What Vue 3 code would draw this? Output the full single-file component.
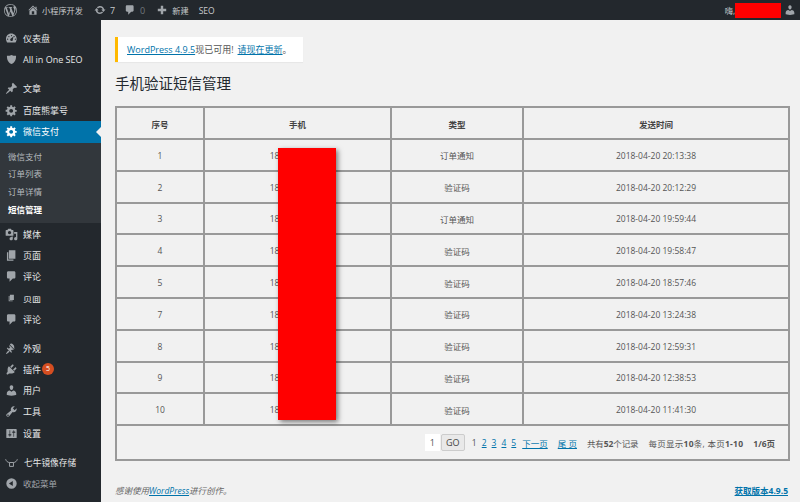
<script setup>
const topItems = [
  { icon: 'gauge', label: '仪表盘' },
  { icon: 'shield', label: 'All in One SEO' },
  { sep: true },
  { icon: 'pin', label: '文章' },
  { icon: 'gear', label: '百度熊掌号' },
]
const subItems = [
  { label: '微信支付' },
  { label: '订单列表' },
  { label: '订单详情' },
  { label: '短信管理', current: true },
]
const lowerItems = [
  { icon: 'media', label: '媒体' },
  { icon: 'page', label: '页面' },
  { icon: 'bubble', label: '评论' },
  { icon: 'page', label: '页面', clipped: true },
  { icon: 'bubble', label: '评论' },
  { sep: true },
  { icon: 'brush', label: '外观' },
  { icon: 'plug', label: '插件', badge: '5' },
  { icon: 'user', label: '用户' },
  { icon: 'wrench', label: '工具' },
  { icon: 'settings', label: '设置' },
  { sep: true },
]
const paths = {
  wp: 'M20 10c0-5.510-4.490-10-10-10C4.480 0 0 4.490 0 10c0 5.520 4.480 10 10 10 5.510 0 10-4.480 10-10zM7.780 15.370L4.370 6.220c.55-.02 1.170-.08 1.170-.08.5-.06.44-1.130-.06-1.110 0 0-1.450.11-2.370.11-.18 0-.37 0-.58-.01C4.120 2.690 6.890 1.050 10 1.050c2.300 0 4.390.87 5.980 2.300-.67-.11-1.620.38-1.620 1.540 0 .72.430 1.330.880 2.050.35.610.550 1.360.550 2.460 0 1.490-1.400 5-1.400 5l-3.030-8.370c.54-.02.820-.17.820-.17.5-.05.44-1.250-.06-1.220 0 0-1.440.12-2.380.12-.87 0-2.330-.12-2.330-.12-.5-.03-.56 1.200-.06 1.220l.92.08 1.260 3.410zM17.410 10c.24-.64.740-1.870.430-4.250.7 1.290 1.050 2.710 1.050 4.250 0 3.290-1.730 6.240-4.400 7.780.97-2.590 1.940-5.210 2.920-7.780zM6.100 18.090C3.120 16.650 1.110 13.530 1.110 10c0-1.300.23-2.480.72-3.590C3.250 10.300 4.670 14.200 6.100 18.090zm4.030-6.630l2.580 6.980c-.86.290-1.760.450-2.710.450-.79 0-1.570-.11-2.290-.33.81-2.380 1.620-4.740 2.420-7.100z',
  gauge: 'M3.760 16h12.480c1.100-1.430 1.760-3.210 1.760-5.140C18 6.200 14.180 2.420 9.500 2.420S1.500 6.200 1.500 10.860c0 1.930.66 3.710 1.760 5.140zM10 4.500a1 1 0 1 1 0 2 1 1 0 0 1 0-2zM6 6a1 1 0 1 1 0 2 1 1 0 0 1 0-2zm8 0a1 1 0 1 1 0 2 1 1 0 0 1 0-2zM4 10a1 1 0 1 1 0 2 1 1 0 0 1 0-2zm12 0a1 1 0 1 1 0 2 1 1 0 0 1 0-2zm-6 4a2 2 0 0 1-.8-3.830L13 7l-1.200 5.900A2 2 0 0 1 10 14z',
  shield: 'M10 3C7.500 4.200 5 4.600 3 4.300c-.2 5.700 1.800 10.700 7 12.700 5.200-2 7.200-7 7-12.700-2 .3-4.500-.1-7-1.300z',
  pin: 'M10.440 3.020l1.820-1.820 6.360 6.350-1.830 1.820c-1.050-.68-2.480-.57-3.410.36l-.75.750c-.92.930-1.040 2.350-.35 3.410l-1.830 1.820-2.410-2.410-2.800 2.790c-.42.420-3.380 2.710-3.800 2.290s1.860-3.390 2.280-3.810l2.790-2.790L4.100 9.790l1.830-1.820c1.050.690 2.480.570 3.400-.360l.75-.750c.93-.920 1.050-2.350.36-3.400z',
  gear: 'M18 12h-2.180c-.17.7-.44 1.350-.81 1.930l1.540 1.540-2.100 2.100-1.540-1.540c-.58.360-1.230.640-1.910.810V19H8v-2.180c-.68-.170-1.330-.450-1.910-.810l-1.540 1.540-2.120-2.120 1.540-1.540c-.360-.580-.640-1.230-.810-1.910H1V9.030h2.170c.170-.700.440-1.350.810-1.940L2.430 5.550l2.100-2.100 1.540 1.540c.580-.370 1.240-.640 1.930-.810V2h3v2.180c.68.170 1.330.440 1.910.810l1.540-1.540 2.120 2.120-1.540 1.540c.360.590.640 1.240.810 1.940H18V12zm-8.500 1.500c1.660 0 3-1.340 3-3s-1.340-3-3-3-3 1.340-3 3 1.340 3 3 3z',
  media: 'M13 11V4c0-.55-.45-1-1-1h-1.670L9 1H5L3.670 3H2c-.55 0-1 .45-1 1v7c0 .55.45 1 1 1h10c.55 0 1-.45 1-1zM7 4.500c1.380 0 2.500 1.120 2.500 2.500S8.380 9.500 7 9.500 4.500 8.380 4.500 7 5.620 4.500 7 4.500zM14 6h5v10.500c0 1.380-1.120 2.500-2.500 2.500S14 17.880 14 16.500s1.120-2.500 2.500-2.500c.17 0 .34.020.5.050V9h-3V6zm-4 8.050V13h2v3.500c0 1.380-1.120 2.500-2.500 2.500S7 17.880 7 16.500 8.120 14 9.500 14c.17 0 .34.020.5.050z',
  page: 'M6 15V2h10v13H6zm-1 1h8v2H3V5h2v11z',
  bubble: 'M5 2h9c1.100 0 2 .9 2 2v7c0 1.100-.9 2-2 2h-2l-5 5v-5H5c-1.100 0-2-.9-2-2V4c0-1.100.9-2 2-2z',
  brush: 'M14.480 11.060L7.410 3.990l1.500-1.500c.5-.56 2.300.2 3.540 1.450 1.250 1.250 2.160 3.050 1.590 3.540zm-7.780-6.400l6.720 6.720-1.410 1.410-1.060-1.060-1.770 1.770 1.770 1.770-1.410 1.410-6.720-6.720 1.410-1.410 1.770 1.770 1.770-1.770-1.060-1.060zM5 13l2 2-4.500 3.500-1-1z',
  plug: 'M13.110 4.360L9.870 7.600 8 5.730l3.240-3.240c.35-.34 1.050-.2 1.560.32.520.51.660 1.210.31 1.550zm-8 1.770l.91-1.120 9.010 9.010-1.190.84c-.71.710-2.630 1.160-3.820 1.160H6.140L4.900 17.260c-.59.590-1.540.59-2.120 0-.59-.58-.59-1.530 0-2.120l1.240-1.240v-3.880c0-1.130.4-3.080 1.090-3.890zm7.260 3.970l3.240-3.240c.34-.35 1.040-.21 1.550.31.520.51.660 1.210.31 1.550l-3.240 3.250z',
  user: 'M10 9.250c-2.270 0-2.730-3.440-2.730-3.440C7 4.020 7.820 2 9.970 2c2.160 0 2.980 2.020 2.710 3.810 0 0-.41 3.440-2.680 3.440zm0 2.570L12.720 10c2.390 0 4.520 2.330 4.520 4.530v2.490s-3.650 1.130-7.240 1.130c-3.650 0-7.240-1.130-7.240-1.130v-2.490c0-2.250 1.940-4.480 4.470-4.480z',
  wrench: 'M16.680 9.770c-1.340 1.340-3.300 1.670-4.950.99l-5.410 6.520c-.99.990-2.590.99-3.580 0s-.99-2.590 0-3.570l6.520-5.420c-.68-1.650-.35-3.610.99-4.950 1.280-1.280 3.120-1.620 4.720-1.060l-2.890 2.890 2.820 2.820 2.860-2.860c.53 1.580.18 3.390-1.080 4.640zM3.810 16.740c.45.450 1.180.45 1.630 0 .44-.45.44-1.180 0-1.630-.45-.45-1.180-.45-1.630 0-.45.450-.45 1.180 0 1.630z',
  settings: 'M18 16V4c0-.55-.45-1-1-1H3c-.55 0-1 .45-1 1v12c0 .55.45 1 1 1h14c.55 0 1-.45 1-1zM8 11h1c.55 0 1 .45 1 1s-.45 1-1 1H8v1.500c0 .28-.22.5-.5.5s-.5-.22-.5-.5V13H6c-.55 0-1-.45-1-1s.45-1 1-1h1V5.500c0-.28.22-.5.5-.5s.5.22.5.5V11zm5-2h-1c-.55 0-1-.45-1-1s.45-1 1-1h1V5.500c0-.28.22-.5.5-.5s.5.22.5.5V7h1c.55 0 1 .45 1 1s-.45 1-1 1h-1v5.500c0 .28-.22.5-.5.5s-.5-.22-.5-.5V9z',
  home: 'M16 8.500l1.530 1.530-1.060 1.060L10 4.620l-6.470 6.470-1.060-1.060L10 2.500l4 4v-2h2v4zm-6-2.460l6 5.990V18H4v-5.970zM12 17v-5H8v5h4z',
  update: 'M10.200 3.280c3.530 0 6.430 2.610 6.920 6h2.080l-3.500 4-3.500-4h2.320c-.45-1.970-2.210-3.440-4.320-3.440-1.450 0-2.730.71-3.540 1.780L4.950 5.660C6.230 4.200 8.110 3.280 10.200 3.280zm-.4 13.440c-3.520 0-6.430-2.610-6.920-6H.8l3.500-4c1.170 1.330 2.330 2.670 3.500 4H5.480c.45 1.970 2.210 3.440 4.320 3.440 1.450 0 2.730-.71 3.540-1.780l1.710 1.950c-1.280 1.460-3.150 2.390-5.250 2.390z',
  plus: 'M17 8v4h-5v5H8v-5H3V8h5V3h4v5h5z',
  collapse: 'M10 2a8 8 0 1 0 0 16 8 8 0 0 0 0-16zm2 4v8l-6-4z',
}
const rows = [
  [1, '订单通知', '2018-04-20 20:13:38'],
  [2, '验证码', '2018-04-20 20:12:29'],
  [3, '订单通知', '2018-04-20 19:59:44'],
  [4, '验证码', '2018-04-20 19:58:47'],
  [5, '验证码', '2018-04-20 18:57:46'],
  [7, '验证码', '2018-04-20 13:24:38'],
  [8, '验证码', '2018-04-20 12:59:31'],
  [9, '验证码', '2018-04-20 12:38:53'],
  [10, '验证码', '2018-04-20 11:41:30'],
]
</script>

<template>
  <div class="page">
    <header class="bar">
      <div class="bar-left">
        <svg class="wp" viewBox="0 0 20 20"><path :d="paths.wp" /></svg>
        <span class="bar-item site"><svg class="bi" viewBox="0 0 20 20"><path :d="paths.home" /></svg><span class="t-small">小程序开发</span></span>
        <span class="bar-item"><svg class="bi" viewBox="0 0 20 20"><path :d="paths.update" /></svg>7</span>
        <span class="bar-item wide"><svg class="bi" viewBox="0 0 20 20"><path :d="paths.bubble" /></svg><span class="dim">0</span></span>
        <span class="bar-item"><svg class="bi" viewBox="0 0 20 20"><path :d="paths.plus" /></svg><span class="t-small">新建</span></span>
        <span class="bar-item seo">SEO</span>
      </div>
      <div class="bar-right">
        <span class="t-small">嗨,</span>
        <span class="redact-name"></span>
        <svg class="bi" viewBox="0 0 20 20"><path :d="paths.user" /></svg>
      </div>
    </header>

    <div class="body">
      <aside class="side">
        <nav class="menu">
          <template v-for="(m, i) in topItems" :key="'t' + i">
            <div v-if="m.sep" class="sep"></div>
            <div v-else class="item"><svg class="mi" viewBox="0 0 20 20"><path :d="paths[m.icon]" /></svg><span>{{ m.label }}</span></div>
          </template>
          <div class="item active">
            <svg class="mi" viewBox="0 0 20 20"><path :d="paths.gear" /></svg><span>微信支付</span>
            <i class="notch"></i>
          </div>
          <div class="submenu">
            <div v-for="s in subItems" :key="s.label" class="sub" :class="{ current: s.current }">{{ s.label }}</div>
          </div>
          <template v-for="(m, i) in lowerItems" :key="'l' + i">
            <div v-if="m.sep" class="sep"></div>
            <div v-else class="item" :class="{ clipped: m.clipped }">
              <svg class="mi" viewBox="0 0 20 20"><path :d="paths[m.icon]" /></svg><span>{{ m.label }}</span>
              <b v-if="m.badge" class="badge">{{ m.badge }}</b>
            </div>
          </template>
          <div class="item cow">
            <svg class="mi" viewBox="0 0 20 20"><path d="M1 5c1 3 3 5 6 5v6h6v-6c3 0 5-2 6-5M7 10h6" fill="none" stroke="#a0a5aa" stroke-width="1.500" /></svg><span>七牛镜像存储</span>
          </div>
          <div class="item collapse"><svg class="mi" viewBox="0 0 20 20"><path :d="paths.collapse" /></svg><span>收起菜单</span></div>
        </nav>
      </aside>

      <main class="main">
        <div class="notice"><a>WordPress 4.9.5</a>现已可用!<a class="gap">请现在更新</a><span class="period">。</span></div>
        <h1>手机验证短信管理</h1>
        <div class="table-wrap">
          <table>
            <colgroup><col class="c1" /><col class="c2" /><col class="c3" /><col class="c4" /></colgroup>
            <thead><tr><th>序号</th><th>手机</th><th>类型</th><th>发送时间</th></tr></thead>
            <tbody>
              <tr v-for="r in rows" :key="r[0]">
                <td>{{ r[0] }}</td>
                <td class="phone"><span>18</span></td>
                <td>{{ r[1] }}</td>
                <td class="time">{{ r[2] }}</td>
              </tr>
            </tbody>
            <tfoot>
              <tr>
                <td colspan="4">
                  <div class="pager">
                    <span class="go-input">1</span>
                    <span class="go">GO</span>
                    <span class="nums"><span>1</span><a>2</a><a>3</a><a>4</a><a>5</a></span>
                    <a class="next">下一页</a>
                    <a class="last">尾 页</a>
                    <span class="info">共有<b>52</b>个记录</span>
                    <span class="info2">每页显示<b>10</b>条,&nbsp;本页<b>1-10</b></span>
                    <b class="info3">1/6页</b>
                  </div>
                </td>
              </tr>
            </tfoot>
          </table>
          <div class="redact-phone"></div>
        </div>
        <footer class="foot">
          <em>感谢使用<a>WordPress</a>进行创作。</em>
          <a class="ver">获取版本4.9.5</a>
        </footer>
      </main>
    </div>
  </div>
</template>

<style>
html, body { margin: 0; background: #f1f1f1; overflow: hidden; }
</style>

<style scoped>
.page { width: 800px; height: 502px; overflow: hidden; font-family: "Open Sans", "Noto Sans CJK SC", sans-serif; font-size: 9px; color: #444; background: #f1f1f1; }
.bar { height: 20px; background: #23282d; display: flex; justify-content: space-between; align-items: center; color: #c8cacc; }
.bar-left { display: flex; align-items: center; }
.wp { width: 13px; height: 13px; margin-left: 4px; margin-right: 10px; fill: #a0a5aa; }
.bar-item { display: flex; align-items: center; gap: 4px; margin-right: 9px; }
.site { gap: 3px; margin-right: 11px; }
.wide { margin-right: 11px; }
.bi { width: 12px; height: 12px; fill: #a0a5aa; flex: none; }
.t-small { font-size: 8.200px; }
.dim { color: #72777c; }
.seo { font-size: 8.500px; margin-left: 1px; }
.bar-right { display: flex; align-items: center; padding-right: 4px; }
.redact-name { width: 46px; height: 15px; background: #f00; margin-right: 3px; }
.body { display: flex; height: 482px; }
.side { width: 101px; background: #23282d; flex: none; padding-top: 8px; box-sizing: border-box; }
.item { position: relative; height: 21.300px; display: flex; align-items: center; color: #e6e7e8; font-size: 9px; padding-left: 5px; gap: 5px; }
.mi { width: 13px; height: 13px; fill: #a0a5aa; flex: none; }
.sep { height: 7.500px; }
.active { background: #0073aa; color: #fff; height: 22px; }
.active .mi { fill: #fff; }
.notch { position: absolute; right: 0; top: 6px; border: 5px solid transparent; border-left-width: 0; border-right-color: #f1f1f1; }
.submenu { background: #32373c; padding: 5px 0 5px; }
.sub { height: 17.700px; line-height: 17.700px; padding-left: 8px; font-size: 8.500px; color: #b4b9be; }
.sub.current { color: #fff; font-weight: 700; }
.clipped > span { height: 7px; line-height: 1; overflow: hidden; display: flex; align-items: flex-end; margin-top: 3px; }
.clipped .mi { height: 8px; }
.badge { width: 12px; height: 12px; border-radius: 50%; background: #d54e21; color: #fff; font-size: 7px; font-weight: 400; line-height: 12px; text-align: center; margin-left: -4px; }
.cow span { margin-left: 1px; font-size: 8.700px; }
.collapse { color: #a0a5aa; font-size: 8.500px; }
.main { flex: 1; min-width: 0; padding: 17px 12px 0 14px; }
.notice { width: 188px; height: 25px; box-sizing: border-box; background: #fff; border-left: 3px solid #ffb900; padding-left: 9px; line-height: 25px; font-size: 9px; color: #555; box-shadow: 0 1px 1px rgba(0,0,0,.04); white-space: nowrap; }
a { color: #0073aa; text-decoration: underline; }
.gap { margin-left: 4px; }
.period { color: #555; }
h1 { margin: 12px 0 12px; font-size: 14.500px; line-height: 20px; font-weight: 400; color: #23282d; }
.table-wrap { position: relative; width: 673px; }
table { width: 673px; border-collapse: collapse; table-layout: fixed; }
.c1 { width: 88px; } .c2 { width: 187px; } .c3 { width: 132px; } .c4 { width: 266px; }
th, td { border: 2px solid #999; text-align: center; padding: 1px 0 0; font-size: 8.500px; color: #555; }
thead tr { height: 32px; }
tbody tr { height: 31.800px; }
th { font-weight: 700; color: #444; }
.phone span { display: inline-block; margin-right: 46px; }
.time { font-size: 8.500px; }
tfoot tr { height: 35px; }
tfoot td { padding-top: 0; }
.pager { display: flex; justify-content: flex-end; align-items: center; padding-right: 13px; white-space: nowrap; }
.go-input { width: 15px; height: 17px; background: #fff; line-height: 17px; font-size: 9px; text-align: center; margin-right: 1px; }
.go { width: 24px; height: 17px; box-sizing: border-box; background: #e9e9e9; border: 1px solid #ccc; border-radius: 2px; line-height: 15px; text-align: center; color: #444; font-size: 9px; margin-right: 7px; }
.nums { display: flex; gap: 5px; }
.next { margin-left: 6px; }
.last, .info3 { margin-left: 10px; }
.info { margin-left: 10px; letter-spacing: -.1px; }
.info2 { margin-left: 10px; letter-spacing: .25px; }
b { font-weight: 700; }
.redact-phone { position: absolute; left: 163px; top: 42px; width: 58px; height: 272px; background: #f00; box-shadow: 2px 2px 5px rgba(0,0,0,.5); }
.foot { display: flex; justify-content: space-between; margin-top: 23px; font-size: 8.500px; color: #666; }
.ver { font-weight: 700; }
</style>
